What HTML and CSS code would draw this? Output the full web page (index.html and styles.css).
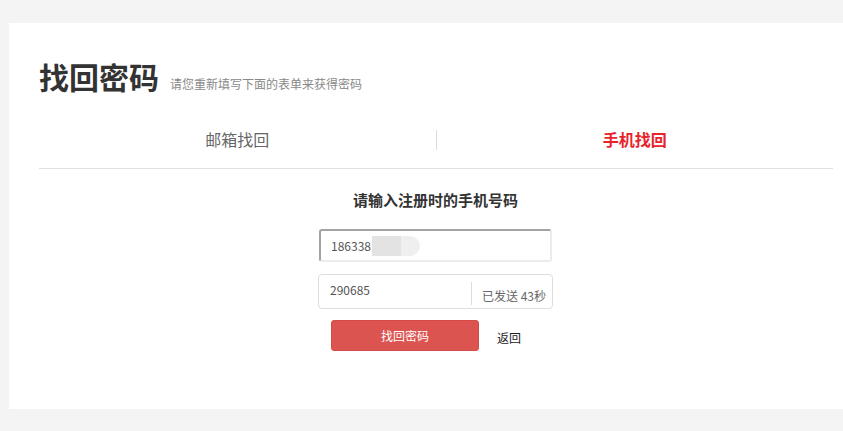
FILE: index.html
```html
<!DOCTYPE html>
<html lang="zh-CN">
<head>
    <meta charset="UTF-8">
    <title>找回密码</title>
    <link rel="stylesheet" href="styles.css">
</head>
<body>
    <div class="panel">
        <div class="page-title">
            <h1>找回密码</h1>
            <span class="subtitle">请您重新填写下面的表单来获得密码</span>
        </div>

        <div class="tabs">
            <a class="tab" href="#">邮箱找回</a>
            <span class="tab-sep"></span>
            <a class="tab active" href="#">手机找回</a>
        </div>

        <div class="form">
            <h3>请输入注册时的手机号码</h3>

            <div class="field phone">
                <input type="text" value="186338">
                <span class="mask"></span>
            </div>

            <div class="field code">
                <input type="text" value="290685">
                <span class="sent">已发送 43秒</span>
            </div>

            <div class="actions">
                <button type="button">找回密码</button>
                <a class="back" href="#">返回</a>
            </div>
        </div>
    </div>
</body>
</html>
```

FILE: styles.css
```css
body {
    margin: 0;
    background: #f4f4f4;
    font-family: "Noto Sans CJK SC", "Noto Sans", sans-serif;
    color: #333;
    overflow: hidden;
    padding: 23px 0 0 9px;
}

.panel {
    background: #fff;
    width: 860px;
    height: 386px;
    padding: 32px 0 0 30px;
    box-sizing: border-box;
}

.page-title {
    display: flex;
    align-items: baseline;
}

.page-title h1 {
    margin: 0;
    font-size: 30px;
    line-height: 42px;
    font-weight: bold;
    color: #333;
}

.subtitle {
    margin-left: 11px;
    font-size: 12px;
    color: #888;
}

.tabs {
    display: flex;
    align-items: center;
    width: 794px;
    margin-top: 22px;
    border-bottom: 1px solid #e0e0e0;
}

.tab {
    flex: 1;
    text-align: center;
    padding: 9px 0 18px;
    line-height: 22px;
    font-size: 16px;
    color: #666;
    text-decoration: none;
}

.tab.active {
    color: #e8232b;
    font-weight: bold;
}

.tab-sep {
    width: 1px;
    height: 20px;
    margin-top: -8px;
    background: #ddd;
}

.form {
    width: 235px;
    margin: 0 0 0 279px;
}

.form h3 {
    margin: 21px 0 19px;
    text-align: center;
    font-size: 15px;
    line-height: 20px;
    font-weight: bold;
    color: #333;
}

.field {
    position: relative;
    display: flex;
    align-items: center;
    box-sizing: border-box;
}

.field input {
    flex: 1;
    min-width: 0;
    border: none;
    outline: none;
    background: transparent;
    font-family: inherit;
    font-size: 12px;
    color: #555;
}

.phone {
    width: 233px;
    height: 33px;
    margin-left: 1px;
    border-style: solid;
    border-width: 2px;
    border-color: #a3a3a3 #ececec #ececec #a3a3a3;
    border-radius: 3px;
}

.phone input {
    padding: 0 0 0 10px;
}

.mask {
    position: absolute;
    left: 51px;
    top: 5px;
    width: 48px;
    height: 20px;
    border-radius: 0 10px 10px 0;
    background: linear-gradient(to right, #e3e3e3 0, #e3e3e3 60%, #efefef 60%);
}

.code {
    height: 35px;
    margin-top: 12px;
    border: 1px solid #dedede;
    border-radius: 4px;
}

.code input {
    padding: 0 0 4px 11px;
}

.sent {
    border-left: 1px solid #ddd;
    height: 19px;
    line-height: 19px;
    margin-top: 4px;
    padding: 4px 0 0 10px;
    font-size: 12px;
    color: #666;
    width: 70px;
    box-sizing: content-box;
    white-space: nowrap;
}

.actions {
    display: flex;
    align-items: center;
    margin-top: 11px;
    padding-left: 13px;
}

.actions button {
    width: 148px;
    height: 31px;
    border: 1px solid #d54b47;
    border-radius: 3px;
    background: #dc5450;
    color: #fff;
    font-family: inherit;
    font-size: 12px;
    cursor: pointer;
}

.back {
    margin-left: 18px;
    padding-top: 3px;
    font-size: 12px;
    color: #222;
    text-decoration: none;
}
```
